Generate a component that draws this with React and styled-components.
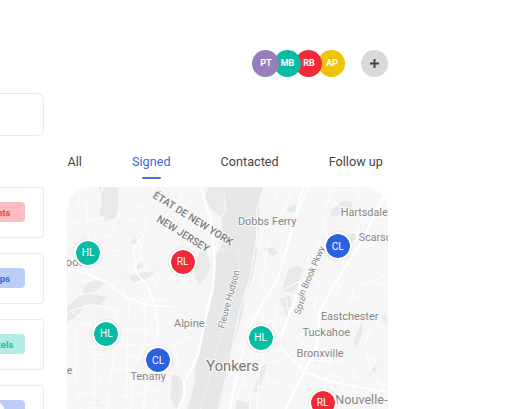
import React from "react";
import styled, { createGlobalStyle } from "styled-components";

const GlobalStyle = createGlobalStyle`
  * { box-sizing: border-box; }
  body { margin: 0; background: #fff; overflow: hidden; font-family: Roboto, "Liberation Sans", sans-serif; }
`;

const Page = styled.main`
  display: flex;
  gap: 23.9px;
  width: 505px;
  height: 409px;
  overflow: hidden;
  background: #fff;
`;

const Sidebar = styled.aside`
  position: relative;
  width: 43.6px;
  flex: none;
  padding-top: 93px;
  display: flex;
  flex-direction: column;
  overflow: hidden;
`;

const SearchBox = styled.div`
  flex: none;
  height: 42.5px;
  margin-bottom: 51px;
  border: 1px solid #e9e9eb;
  border-left: 0;
  border-radius: 0 7px 7px 0;
`;

const CategoryList = styled.div`
  display: flex;
  flex-direction: column;
  gap: 15px;
`;

const CategoryCard = styled.div`
  flex: none;
  height: 51px;
  border: 1px solid #ebebed;
  border-left: 0;
  border-radius: 0 4px 4px 0;
  display: flex;
  align-items: center;
`;

const Tag = styled.span`
  display: flex;
  align-items: center;
  justify-content: flex-end;
  width: 24.7px;
  height: 20.5px;
  padding-right: ${(p) => p.$pad}px;
  border-radius: 0 4px 4px 0;
  background: ${(p) => p.$bg};
  color: ${(p) => p.$color};
  font-size: 9.6px;
  font-weight: 700;
  white-space: nowrap;
`;

const FloatingButton = styled.div`
  position: absolute;
  left: -34px;
  top: 397px;
  width: 40px;
  height: 40px;
  border-radius: 50%;
  background: #fff;
`;

const Content = styled.section`
  width: 320.5px;
  flex: none;
  padding-top: 49.5px;
  display: flex;
  flex-direction: column;
`;

const Team = styled.header`
  flex: none;
  display: flex;
  justify-content: flex-end;
  align-items: center;
  height: 27px;
`;

const Avatar = styled.div`
  position: relative;
  z-index: ${(p) => p.$level};
  width: 27px;
  height: 27px;
  margin-right: ${(p) => p.$gap}px;
  border-radius: 50%;
  display: grid;
  place-items: center;
  background: ${(p) => p.$bg};
  color: #fff;
  font-size: 9px;
  font-weight: 700;
`;

const AddButton = styled.button`
  width: 27px;
  height: 27px;
  padding: 0;
  border: 0;
  border-radius: 50%;
  background: #d9d9d9;
  display: grid;
  place-items: center;
`;

const Tabs = styled.nav`
  flex: none;
  display: flex;
  justify-content: space-between;
  height: 26px;
  margin: 76px 5px 8.3px 0;
`;

const Tab = styled.a`
  display: flex;
  flex-direction: column;
  justify-content: space-between;
  align-items: center;
  color: ${(p) => (p.$active ? "#3e68d5" : "#454545")};
  font-size: 12.6px;
  line-height: 18px;
  letter-spacing: 0.04px;
  white-space: nowrap;
`;

const TabMarker = styled.span`
  width: 19px;
  height: 2px;
  border-radius: 1px;
  background: #4b70d6;
`;

const MapFrame = styled.div`
  position: relative;
  flex: none;
  width: 320.5px;
  height: 260px;
  border-radius: 23px;
  overflow: hidden;
  background: #f6f6f6;
`;

const MapDrawing = styled.svg`
  display: block;
`;

const MapLabel = styled.text`
  fill: ${(p) => p.$fill || "#868686"};
  font-family: Roboto, "Liberation Sans", sans-serif;
  font-size: ${(p) => p.$size || 11}px;
  font-weight: ${(p) => p.$weight || 400};
  stroke: #f9f9f9;
  stroke-width: 2px;
  stroke-linejoin: round;
  paint-order: stroke;
`;

const Pin = styled.div`
  position: absolute;
  left: ${(p) => p.$x - 67.5 - 14}px;
  top: ${(p) => p.$y - 187 - 14}px;
  width: 28px;
  height: 28px;
  border: 2px solid #fff;
  border-radius: 50%;
  background: ${(p) => p.$bg};
  background-clip: padding-box;
  box-shadow: 0 0 2px rgba(0, 0, 0, 0.18);
  display: grid;
  place-items: center;
  color: #fff;
  font-size: 10.2px;
`;

const TEAL = "#07bba5";
const RED = "#f22938";
const BLUE = "#2b60df";

const members = [
  { name: "PT", bg: "#957eb9", gap: -5.5 },
  { name: "MB", bg: TEAL, gap: -5.5 },
  { name: "RB", bg: RED, gap: -4 },
  { name: "AP", bg: "#edc407", gap: 15.5 },
];

const tags = [
  { text: "Restaurants", bg: "#fcbdc2", color: "#ef4354", pad: 14.2 },
  { text: "Shops", bg: "#bdcef5", color: "#3e69dd", pad: 14.7 },
  { text: "Hotels", bg: "#b2ece4", color: "#22bda8", pad: 11.2 },
  { text: "Shops", bg: "#bdcef5", color: "#3e69dd", pad: 14.7 },
];

const pins = [
  { name: "HL", x: 88.2, y: 252.8, bg: TEAL },
  { name: "RL", x: 182.6, y: 261.8, bg: RED },
  { name: "CL", x: 337.8, y: 246.3, bg: BLUE },
  { name: "HL", x: 106.3, y: 334, bg: TEAL },
  { name: "HL", x: 260.6, y: 338, bg: TEAL },
  { name: "CL", x: 158.2, y: 360.3, bg: BLUE },
  { name: "RL", x: 322.6, y: 402.8, bg: RED },
];

const labels = [
  { text: "Dobbs Ferry", x: 238.4, y: 224.5, w: 58.5 },
  { text: "Hartsdale", x: 341.2, y: 216, w: 47 },
  { text: "Scarsdale", x: 359.3, y: 240.7, w: 47 },
  { text: "Closter wood", x: 19.5, y: 265.5, w: 66 },
  { text: "Alpine", x: 174.5, y: 326.5, w: 30.5 },
  { text: "Eastchester", x: 321.4, y: 319.7, w: 57.5 },
  { text: "Tuckahoe", x: 303, y: 336, w: 47.5 },
  { text: "Bronxville", x: 297.1, y: 357, w: 47 },
  { text: "Tenafly", x: 130.9, y: 380, w: 35.5 },
  { text: "Yonkers", x: 206.8, y: 370.5, w: 52.5, size: 14.3, fill: "#777" },
  { text: "Nouvelle-Rochelle", x: 335.8, y: 404, w: 100, size: 12.4 },
  { text: "Teterboro Village", x: -8.1, y: 373.5, w: 81 },
];

const minorRoads = [
  "M67 211L84 206L98 199L103 187 M67 225L105 217L113 222L123 215L143 205L155 187",
  "M79 187L78 239 M87 196L89 240L112 236L118 214L127 220L143 221L151 213L142 204",
  "M124 187L137 203L147 221L139 259L126 284 M105 188L85 214 M67 242L87 241",
  "M112 242L104 252L114 264L132 269L151 254L158 238L178 224L192 212",
  "M67 276L91 267L105 268L121 280L126 297 M67 291L86 281L101 279",
  "M141 239L143 263L154 279L159 303 M151 255L167 264L178 283 M128 285L168 276L198 281",
  "M179 188L183 203L193 215L207 226 M187 187L178 204L171 222L162 239",
  "M197 187L188 207L181 232L172 257L150 295L139 317",
  "M67 313L91 304L115 310L143 300L174 301 M67 327L84 324L111 332L146 328L177 341",
  "M67 342L82 347L144 344L169 347L202 333 M67 363L87 349L101 340",
  "M78 320L76 374L81 409 M96 318L95 409 M118 309L112 373L107 409",
  "M129 298L127 410 M145 302L145 343L134 370L131 409 M159 309L144 343 M67 383L97 380L112 388L137 383",
  "M84 373L131 369L174 374 M81 392L125 396L159 389 M165 371L154 409 M175 344L180 371",
  "M70 310L81 318L82 326 M111 318L139 314 M91 354L143 356 M71 402L126 403 M100 374L103 401",
  "M160 190L170 202L192 209 M160 225L139 233 M67 260L83 268 M107 250L119 251L140 242",
  "M180 300L195 318L209 326 M171 312L187 333 M174 350L191 335",
  "M264 188L257 211L257 238L251 275L239 315L231 357L219 409",
  "M280 187L266 220L260 244L268 267L262 297 M293 188L282 215L268 248L261 287L246 330",
  "M283 252L272 277L264 301L253 319L241 346L231 376 M258 301L283 290L303 280",
  "M249 323L254 343L249 371L231 409 M265 304L262 330L252 365L250 409",
  "M278 303L276 321L271 334L260 370L257 409 M239 347L261 354L287 350",
  "M243 331L266 321L293 317 M235 370L251 375L266 363L283 360 M230 383L255 388L284 381",
  "M287 300L292 329L304 343L300 370L286 409 M267 350L268 377L274 401",
  "M297 206L315 219L327 232 M302 205L285 231 M315 198L329 191L354 190L387 204",
  "M333 187L326 211L325 231L306 263L299 286 M354 187L367 211L362 234L345 255L337 297",
  "M316 238L333 268L353 282L387 284 M334 202L356 218L387 225 M378 187L363 213L354 249",
  "M387 239L371 257L356 274L352 301L345 328L331 359L323 397",
  "M320 280L315 307L322 332L316 348L298 370L281 400 M330 307L356 322L387 327",
  "M284 309L310 306L328 294L347 300L375 293L387 300 M316 347L344 358L361 361L387 356",
  "M280 345L305 360L341 361L369 372L387 375 M285 374L318 366L336 377L358 373",
  "M306 373L324 379L345 369L368 386L382 409 M331 407L344 389L353 377L387 385",
  "M281 333L294 340L307 332L319 333 M299 363L312 383L309 409 M345 377L334 409",
  "M371 327L365 345L372 371L387 393 M342 345L355 360L354 390L365 409 M371 277L387 293",
  "M361 269L370 250L387 260 M360 287L387 275 M338 291L348 275L361 278L387 270",
];

const parkAreas = [
  "M99 187L118 187L119 201L117 218L107 221L99 214L103 204Z",
  "M84 288L94 279L106 283L94 292L83 293Z",
  "M131 243L137 237L137 244Z M138 264L144 261L144 267L137 270Z",
  "M126 276L153 271L154 276L136 282Z",
  "M202 245L207 248L211 266L207 276L200 285L195 278L196 261Z",
  "M67 307L80 296L90 294L108 297L101 305L86 305L76 317L67 323Z",
  "M172 378L176 374L184 382L182 398L177 409L171 399Z",
  "M208 187L225 187L225 211L222 218L211 207L206 200Z",
  "M332 210L342 201L352 202L353 212L341 214L331 217Z",
  "M287 209L298 204L297 211L290 213Z M289 269L299 265L305 270L302 281L293 293L282 291Z",
  "M360 326L364 322L361 339L356 347L354 342Z M280 299L291 295L292 307L287 316Z",
  "M265 249L274 247L279 254L273 256Z M254 391L263 364L268 365L258 393Z",
  "M237 400L250 403L249 409L236 409Z M386 313L382 317L384 323L388 322Z",
  "M371 370L377 365L376 374L370 374Z M314 364L321 359L316 361Z M96 401L101 400L94 409Z",
];

function TerritoryMap() {
  return (
    <MapDrawing width="320.5" height="260" viewBox="67.5 187 320.5 260">
      <g fill="#e9e9e9">
        {parkAreas.map((d) => <path key={d} d={d} />)}
      </g>
      <path fill="#e7e7e7" d="M225 187H264L259 207L260 220L256 244L258 250L252 279L246 294L243 314L235 341L228 375L224 391L220 409L215 447H182L188 409L195 383L195 370L201 350L203 333L211 306L213 281L216 267L217 254L223 242L222 220L227 211Z" />
      <g fill="none" stroke="#fdfdfd" strokeWidth="1">
        {minorRoads.map((d) => <path key={d} d={d} />)}
      </g>
      <g fill="none" stroke="#fff" strokeWidth="2.2" strokeLinejoin="round">
        <path d="M201 187L211 218L214 245L215 270L213 292L209 302L204 329L199 353L191 371L184 382L186 395L179 409" />
        <path d="M309 187L299 210L290 240L277 282L263 304L249 330L240 365L230 409" strokeWidth="1.8" />
        <path d="M304 187L297 210L287 245" strokeWidth="1.5" />
        <path d="M328 231L323 256L301 285L292 309L281 338" />
        <path d="M387 192L362 242L332 289L320 312L317 348L301 379L286 409" />
        <path d="M67 268L85 273L109 283L126 297L148 305L174 307" strokeWidth="1.6" />
        <path d="M140 239L134 250L137 273L148 286L156 309L159 330L149 362L144 409" strokeWidth="1.5" />
        <path d="M280 346L303 370L331 382L387 392" strokeWidth="1.5" />
      </g>
      <circle cx="353" cy="237" r="3.4" fill="#e5e5e5" />
      <path d="M207 239L218 249H239V263L238 281L229 310L219 343L214 363L207 388L201 409" fill="none" stroke="#f8f8f8" strokeWidth="1" strokeDasharray="2 2" />
      <MapLabel $size={10.4} $weight={500} $fill="#7c7c7c" x="152.6" y="197.2" transform="rotate(32 152.6 197.2)" textLength="92" lengthAdjust="spacingAndGlyphs">ÉTAT DE NEW YORK</MapLabel>
      <MapLabel $size={10.4} $weight={500} $fill="#7c7c7c" x="156.4" y="221" transform="rotate(32 156.4 221)" textLength="59.5" lengthAdjust="spacingAndGlyphs">NEW JERSEY</MapLabel>
      <MapLabel $size={9.6} x="224.7" y="329" transform="rotate(-75 224.7 329)" textLength="60" lengthAdjust="spacingAndGlyphs">Fleuve Hudson</MapLabel>
      <MapLabel $size={9.2} x="300.5" y="315" transform="rotate(-72 300.5 315)" textLength="19">Spra</MapLabel>
      <MapLabel $size={9.2} x="304" y="297.5" transform="rotate(-66.5 304 297.5)" textLength="54" lengthAdjust="spacingAndGlyphs">in Brook Pkwy</MapLabel>
      {labels.map(({ text, x, y, w, size, fill }) => (
        <MapLabel key={text} $size={size} $fill={fill} x={x} y={y} textLength={w} lengthAdjust="spacingAndGlyphs">{text}</MapLabel>
      ))}
    </MapDrawing>
  );
}

export default function App() {
  return (
    <>
      <GlobalStyle />
      <Page>
        <Sidebar>
          <SearchBox />
          <CategoryList>
            {tags.map((t, i) => (
              <CategoryCard key={i}>
                <Tag $bg={t.bg} $color={t.color} $pad={t.pad}>{t.text}</Tag>
              </CategoryCard>
            ))}
          </CategoryList>
          <FloatingButton />
        </Sidebar>
        <Content>
          <Team>
            {members.map((m, i) => (
              <Avatar key={m.name} $bg={m.bg} $gap={m.gap} $level={4 - i}>{m.name}</Avatar>
            ))}
            <AddButton aria-label="Add member">
              <svg width="9" height="9" viewBox="0 0 9 9" stroke="#414141" strokeWidth="1.9">
                <path d="M4.5 0V9M0 4.5H9" />
              </svg>
            </AddButton>
          </Team>
          <Tabs>
            <Tab>All</Tab>
            <Tab $active>Signed<TabMarker /></Tab>
            <Tab>Contacted</Tab>
            <Tab>Follow up</Tab>
          </Tabs>
          <MapFrame>
            <TerritoryMap />
            {pins.map((p, i) => (
              <Pin key={i} $x={p.x} $y={p.y} $bg={p.bg}>{p.name}</Pin>
            ))}
          </MapFrame>
        </Content>
      </Page>
    </>
  );
}
